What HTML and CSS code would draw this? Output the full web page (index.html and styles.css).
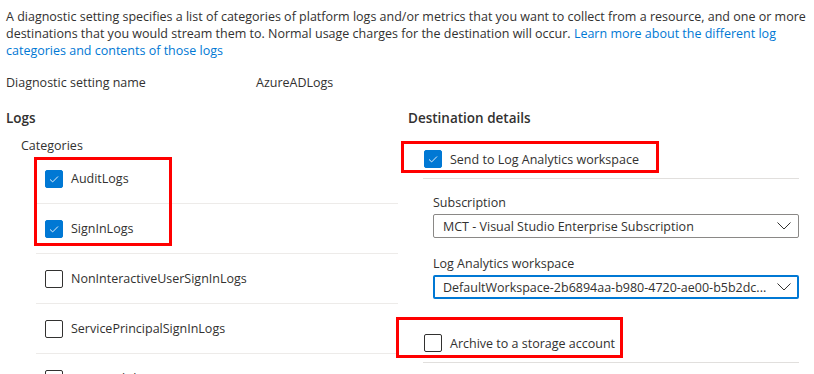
FILE: index.html
```html
<!DOCTYPE html>
<html lang="en">
<head>
    <meta charset="UTF-8">
    <meta name="viewport" content="width=device-width, initial-scale=1.0">
    <title>Diagnostic setting</title>
    <link rel="stylesheet" href="styles.css">
</head>
<body>
<div class="page">
    <p class="intro">A diagnostic setting specifies a list of categories of platform logs and/or metrics that you want to collect from a resource, and one or more destinations that you would stream them to. Normal usage charges for the destination will occur. <a href="#">Learn more about the different log categories and contents of those logs</a></p>

    <div class="name-row">
        <span class="name-label">Diagnostic setting name</span>
        <span>AzureADLogs</span>
    </div>

    <div class="columns">
        <div class="logs">
            <h3>Logs</h3>
            <div class="sub-title">Categories</div>
            <div class="list">
                <label class="row"><span class="box checked"><svg viewBox="0 0 18 18"><path d="M4.5 9.5 L7.5 12.3 L13.5 6.2"/></svg></span>AuditLogs</label>
                <label class="row"><span class="box checked"><svg viewBox="0 0 18 18"><path d="M4.5 9.5 L7.5 12.3 L13.5 6.2"/></svg></span>SignInLogs</label>
                <label class="row"><span class="box"></span>NonInteractiveUserSignInLogs</label>
                <label class="row"><span class="box"></span>ServicePrincipalSignInLogs</label>
                <label class="row"><span class="box"></span>ManagedIdentitySignInLogs</label>
            </div>
        </div>

        <div class="dest">
            <h3>Destination details</h3>
            <div class="dest-group">
                <label class="dest-row first"><span class="box checked"><svg viewBox="0 0 18 18"><path d="M4.5 9.5 L7.5 12.3 L13.5 6.2"/></svg></span>Send to Log Analytics workspace</label>
                <div class="fields">
                    <div class="field-label">Subscription</div>
                    <div class="dropdown">
                        <span class="value">MCT - Visual Studio Enterprise Subscription</span>
                        <svg class="chevron" viewBox="0 0 14 8"><path d="M0.5 0.5 L7 7 L13.5 0.5"/></svg>
                    </div>
                    <div class="field-label">Log Analytics workspace</div>
                    <div class="dropdown focused">
                        <span class="value">DefaultWorkspace-2b6894aa-b980-4720-ae00-b5b2dc...</span>
                        <svg class="chevron" viewBox="0 0 14 8"><path d="M0.5 0.5 L7 7 L13.5 0.5"/></svg>
                    </div>
                </div>
                <label class="dest-row archive"><span class="box"></span>Archive to a storage account</label>
            </div>
        </div>
    </div>

    <!-- red annotation boxes drawn over the screenshot -->
    <div class="mark mark-categories"></div>
    <div class="mark mark-workspace"></div>
    <div class="mark mark-archive"></div>
</div>
</body>
</html>
```

FILE: styles.css
```css
html, body { margin: 0; padding: 0; background: #fff; overflow: hidden; }
body { font-family: "Open Sans", "Noto Sans", sans-serif; font-size: 12.5px; color: #323130; }

.page { position: relative; padding: 8px 0 0 6px; height: 366px; overflow: hidden; }

.intro { margin: 0; line-height: 17px; width: 800px; }
.intro a { color: #0078d4; text-decoration: none; }

.name-row { margin-top: 15px; line-height: 17px; display: flex; }
.name-label { width: 250px; }

.columns { display: grid; grid-template-columns: 392px 391px; gap: 10px; margin-top: 18px; }

h3 { margin: 0; font-size: 13.5px; font-weight: 600; line-height: 18px; }

/* left side: categories */
.sub-title { margin: 11px 0 0 15px; line-height: 16px; }
.list { margin-left: 30px; }
.row {
    display: flex;
    align-items: center;
    gap: 8px;
    height: 49px;
    padding-left: 9px;
    border-bottom: 1px solid #edebe9;
}

/* checkboxes */
.box {
    width: 18px;
    height: 18px;
    box-sizing: border-box;
    border: 1px solid #323130;
    border-radius: 2px;
    flex: none;
    display: flex;
}
.box.checked { background: #0078d4; border-color: #0078d4; }
.box svg { width: 16px; height: 16px; }
.box path { fill: none; stroke: #fff; stroke-width: 1; }

/* right side: destination */
.dest-group { margin-left: 15px; }
.dest-row {
    display: flex;
    align-items: center;
    gap: 8px;
    padding-left: 1px;
    padding-bottom: 10px;
    border-bottom: 1px solid #e1dfdd;
}
.dest-row.first { padding-top: 23px; }
.dest-row.archive { padding-top: 35px; }

.fields { padding-left: 10px; }
.field-label { line-height: 17px; margin: 15px 0 3px; }
.field-label + .dropdown + .field-label { margin-top: 17px; }

.dropdown {
    height: 24px;
    box-sizing: border-box;
    border: 1px solid #8a8886;
    border-radius: 2px;
    display: flex;
    align-items: center;
    padding: 0 7px 0 9px;
}
.dropdown.focused { border: 2px solid #0078d4; padding-left: 8px; padding-right: 6px; }
.dropdown .value { flex: 1; white-space: nowrap; overflow: hidden; }
.chevron { width: 14px; height: 8px; flex: none; }
.chevron path { fill: none; stroke: #323130; stroke-width: 1; }

/* annotations */
.mark { position: absolute; border: 3px solid #ff0000; box-sizing: border-box; }
.mark-categories { left: 34px; top: 157px; width: 138px; height: 89px; }
.mark-workspace { left: 401px; top: 141px; width: 258px; height: 32px; }
.mark-archive { left: 396px; top: 317px; width: 227px; height: 41px; }
```
